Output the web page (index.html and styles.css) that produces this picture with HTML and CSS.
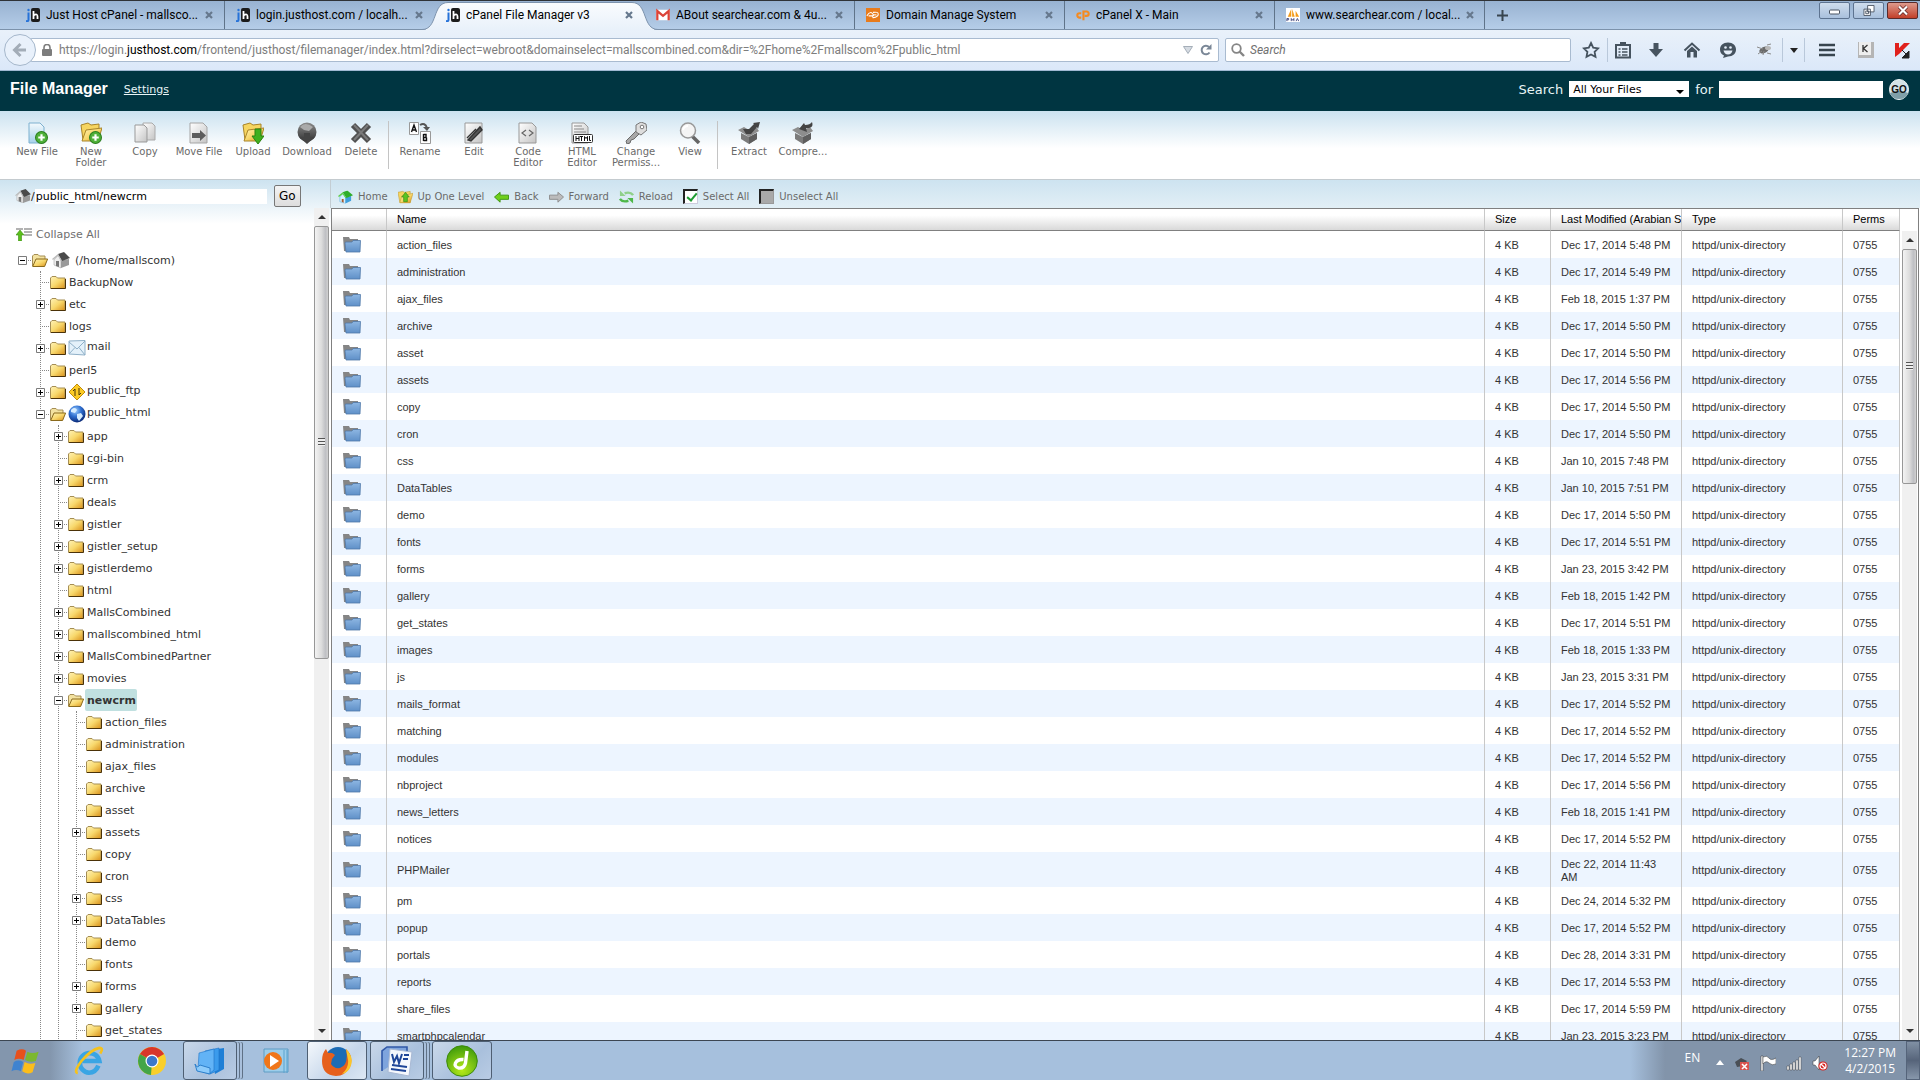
FILE: index.html
```html
<!DOCTYPE html>
<html lang="en">
<head>
<meta charset="utf-8">
<title>cPanel File Manager v3</title>
<link rel="stylesheet" href="styles.css">
</head>
<body>
<svg class="sprite" aria-hidden="true">
  <defs>
    <linearGradient id="gold" x1="0" y1="0" x2="1" y2="1"><stop offset="0" stop-color="#fff3b8"/><stop offset=".5" stop-color="#f8d86c"/><stop offset="1" stop-color="#d9901a"/></linearGradient>
    <linearGradient id="blue" x1="0" y1="0" x2="0" y2="1"><stop offset="0" stop-color="#8db6e2"/><stop offset="1" stop-color="#5f90c8"/></linearGradient>
    <linearGradient id="paper" x1="0" y1="0" x2="1" y2="1"><stop offset="0" stop-color="#fff"/><stop offset="1" stop-color="#c4c4c4"/></linearGradient>
    <linearGradient id="bluepaper" x1="0" y1="0" x2="0" y2="1"><stop offset="0" stop-color="#f4fafd"/><stop offset="1" stop-color="#a5d0ea"/></linearGradient>
    <linearGradient id="dark" x1="0" y1="0" x2="0" y2="1"><stop offset="0" stop-color="#8a8a8a"/><stop offset="1" stop-color="#333"/></linearGradient>
    <linearGradient id="tabfill" x1="0" y1="0" x2="0" y2="1"><stop offset="0" stop-color="#fafcfe"/><stop offset="1" stop-color="#e9f1fa"/></linearGradient>
    <radialGradient id="globe" cx=".4" cy=".3" r=".7"><stop offset="0" stop-color="#9fd0ff"/><stop offset=".5" stop-color="#2f6fd0"/><stop offset="1" stop-color="#0a2a78"/></radialGradient>
    <radialGradient id="lime" cx=".5" cy=".8" r=".8"><stop offset="0" stop-color="#b6ea1c"/><stop offset="1" stop-color="#3e9a0a"/></radialGradient>
  </defs>
  <symbol id="folder" viewBox="0 0 16 13"><path d="M.5 12.500V2L2 .5h4L7.500 2h7.500v10.500z" fill="url(#gold)" stroke="#a58e55"/><path d="M1 12.500h14.500V3" fill="none" stroke="#4b3208"/></symbol>
  <symbol id="folder-open" viewBox="0 0 16 13"><path d="M.5 12V2L2 .5h4L7.500 2h5.500v3" fill="#f3e2a0" stroke="#a58e55"/><path d="M.7 12.500 4 5h11.600l-3 7.500z" fill="url(#gold)" stroke="#8a6a1c"/></symbol>
  <symbol id="dir" viewBox="0 0 18 16"><path d="M0 0h6l1 2h8v12H1z" fill="#858585"/><path d="M2 6l.5-1H9l1-1.500h7.500L17 15H3z" fill="url(#blue)" stroke="#5079a8" stroke-width=".8"/></symbol>
  <symbol id="house" viewBox="0 0 18 16"><path d="M2 8v5l7 3V8L6 3z" fill="#eee" stroke="#999" stroke-width=".5"/><path d="M9 8v8l8-3V7z" fill="#9a9a9a"/><path d="M6 2 12 0l6 6-8 3z" fill="#4a4a4a"/><path d="M0 7 6 2l4 7-1 .5L6 4 1 8z" fill="#bbb"/><path d="M4 9h3v6l-3-1z" fill="#777"/></symbol>
  <symbol id="house-color" viewBox="0 0 16 14"><path d="M2 7v5l6 2V7L5 3z" fill="#d8f0ff" stroke="#58aee0" stroke-width=".6"/><path d="M8 7v7l6-3V6z" fill="#3f9fdc"/><path d="M5 2 10 0l6 5-7 3z" fill="#2fae2a"/><path d="M0 6 5 2l4 6H8L5 4 1 7z" fill="#5fce4a"/><path d="M4 9h2v4l-2-1z" fill="#a85a2a"/></symbol>
  <symbol id="mail" viewBox="0 0 18 16"><path d="M1 1 17 .5V15L1 14z" fill="#e4f1fa" stroke="#8fb0c8"/><path d="m1 2 8 7 8-8M1 14l6-6.500M17 15l-6-7.500" fill="none" stroke="#8fb0c8"/></symbol>
  <symbol id="ftp" viewBox="0 0 18 16"><path d="M9 0 17 8 9 16 1 8z" fill="#fccb25" stroke="#c08d0a"/><path d="M7 12V5L5 7M11 4v7l2-2" fill="none" stroke="#4a3808"/></symbol>
  <symbol id="world" viewBox="0 0 18 18"><circle cx="9" cy="9" r="8.500" fill="url(#globe)"/><path d="M3 5c3-3 5-2 6 0l-2 3-4-1zM9 9l4-1 2 3-4 5-2-3z" fill="#d6ecff"/></symbol>
  <symbol id="tw-plus" viewBox="0 0 14 9"><path d="M.5.500h8v8h-8z" fill="#fff" stroke="#7b7b7b"/><path d="M2 4.500h5M4.500 2v5" stroke="#000"/><path d="M10 4.500h4" stroke="#888" stroke-dasharray="1 1"/></symbol>
  <symbol id="tw-minus" viewBox="0 0 14 9"><path d="M.5.500h8v8h-8z" fill="#fff" stroke="#7b7b7b"/><path d="M2 4.500h5" stroke="#000"/><path d="M10 4.500h4" stroke="#888" stroke-dasharray="1 1"/></symbol>
  <symbol id="tw-leaf" viewBox="0 0 14 9"><path d="M6 4.500h8" stroke="#888" stroke-dasharray="1 1"/></symbol>
  <symbol id="close" viewBox="0 0 8 8"><path d="m1 1 6 6M7 1 1 7" stroke="#66788d" stroke-width="2.200"/></symbol>
  <symbol id="jh" viewBox="0 0 14 14"><rect x="5" width="9" height="14" rx="2" fill="#1c1c1c"/><path d="M7.500 3v8M7.500 7.500q4-2.500 4 1V11" fill="none" stroke="#fff" stroke-width="1.800"/><path d="M2.500 4.500V12q0 1.500-2.500 1" fill="none" stroke="#2672d8" stroke-width="2"/><circle cx="2.500" cy="2" r="1.200" fill="#2672d8"/></symbol>
  <symbol id="badge" viewBox="0 0 12 12"><circle cx="6" cy="6" r="5.500" fill="#4fb13a" stroke="#2d7f20"/><path d="M6 3v6M3 6h6" stroke="#fff" stroke-width="2"/></symbol>
</svg>

<header class="tabstrip">
  <nav class="tabs" aria-label="Open tabs">
    <div class="tab"><svg class="fav"><use href="#jh"/></svg><a href="#">Just Host cPanel - mallsco...</a><button class="x" aria-label="Close tab"><svg><use href="#close"/></svg></button></div>
    <div class="tab"><svg class="fav"><use href="#jh"/></svg><a href="#">login.justhost.com / localh...</a><button class="x" aria-label="Close tab"><svg><use href="#close"/></svg></button></div>
    <div class="tab active"><svg class="shape" viewBox="0 0 236 29"><path d="M0 28.500C16 28.500 10 1.500 26 1.500H210C226 1.500 220 28.500 236 28.500" fill="url(#tabfill)" stroke="#7d93ad"/><path d="M4 28.500H232" stroke="#e9f1fa"/></svg><svg class="fav"><use href="#jh"/></svg><a href="#">cPanel File Manager v3</a><button class="x" aria-label="Close tab"><svg><use href="#close"/></svg></button></div>
    <div class="tab"><svg class="fav" viewBox="0 0 16 12"><path d="M0 0h16v12H0z" fill="#fff"/><path d="M1.500 12V1.500L8 7l6.500-5.500V12" fill="none" stroke="#dc4438" stroke-width="2.600"/></svg><a href="#">ABout searchear.com &amp; 4u...</a><button class="x" aria-label="Close tab"><svg><use href="#close"/></svg></button></div>
    <div class="tab"><svg class="fav" viewBox="0 0 16 16"><path d="M0 0h16v16H0z" fill="#e87b1c"/><path d="M1 9c3-5 6-5 8 0M3 9h5M8 5q6-1 6 2t-6 4q-2-4 4-3" fill="none" stroke="#fff" stroke-width="1.200"/></svg><a href="#">Domain Manage System</a><button class="x" aria-label="Close tab"><svg><use href="#close"/></svg></button></div>
    <div class="tab"><svg class="fav" viewBox="0 0 16 12"><path d="M6 4H4a2.500 2.500 0 0 0 0 5h2M8.500 12V2H12a2.500 2.500 0 0 1 0 5h-2" fill="none" stroke="#f58a1f" stroke-width="2.400"/></svg><a href="#">cPanel X - Main</a><button class="x" aria-label="Close tab"><svg><use href="#close"/></svg></button></div>
    <div class="tab"><svg class="fav" viewBox="0 0 16 16"><path d="M0 0h16v16H0z" fill="#fff"/><path d="m2 10 4-9v9zM7 10V1l3 9zM11 10V3l4 7z" fill="#f39b1a"/><path d="M1 15v-3h2v1.500H1M6 15v-3l1.500 2L9 12v3M11.500 15l1.500-3 1.500 3" fill="none" stroke="#3a3f78"/></svg><a href="#">www.searchear.com / local...</a><button class="x" aria-label="Close tab"><svg><use href="#close"/></svg></button></div>
    <button class="newtab" aria-label="New tab"><svg viewBox="0 0 11 11"><path d="M5.500 0v11M0 5.500h11" stroke="#38454f" stroke-width="2"/></svg></button>
  </nav>
  <div class="winbtns">
    <button aria-label="Minimize"><svg viewBox="0 0 12 10"><rect x=".5" y="4.500" width="10" height="4" rx="1" fill="#fff" stroke="#4a5462"/></svg></button>
    <button aria-label="Restore"><svg viewBox="0 0 12 12"><path d="M4.500.500h7v7h-7zM.5 4.500h7v7h-7z" fill="#fff" stroke="#4a5462"/><path d="M2.500 6.500h3v3h-3z" fill="none" stroke="#4a5462"/></svg></button>
    <button class="danger" aria-label="Close"><svg viewBox="0 0 12 10"><path d="m2 1 8 8M10 1 2 9" stroke="#5a2020" stroke-width="3.600"/><path d="m2 1 8 8M10 1 2 9" stroke="#fff" stroke-width="2.200"/></svg></button>
  </div>
</header>

<div class="navbar">
  <button class="back" aria-label="Back"><svg viewBox="0 0 16 16"><path d="M14 8H3M8.500 2 2.500 8l6 6" fill="none" stroke="#a3adb8" stroke-width="3"/></svg></button>
  <div class="url">
    <svg class="lock" viewBox="0 0 10 12"><path d="M2 6V3.500a3 3 0 0 1 6 0V6" fill="none" stroke="#7d7d7d" stroke-width="1.600"/><rect y="5" width="10" height="7" rx="1" fill="#7d7d7d"/></svg>
    <a class="address" href="#">https://login.<b>justhost.com</b>/frontend/justhost/filemanager/index.html?dirselect=webroot&amp;domainselect=mallscombined.com&amp;dir=%2Fhome%2Fmallscom%2Fpublic_html</a>
    <button aria-label="History"><svg class="i10" viewBox="0 0 10 8"><path d="M.5.500h9L5 7.500z" fill="#d5dbe2" stroke="#a5aeb8"/></svg></button>
    <button aria-label="Reload page"><svg class="i12" viewBox="0 0 12 12"><path d="M9.500 8.500A4.300 4.300 0 1 1 9 3" fill="none" stroke="#7a8797" stroke-width="2"/><path d="M11.500 0v5.500H6z" fill="#7a8797"/></svg></button>
  </div>
  <label class="websearch"><svg viewBox="0 0 14 14"><circle cx="5.500" cy="5.500" r="4.300" fill="none" stroke="#858585" stroke-width="1.800"/><path d="m8.500 8.500 4.500 4.500" stroke="#858585" stroke-width="2.400"/></svg><input type="text" placeholder="Search" aria-label="Web search"></label>
  <div class="tools">
    <button class="star" aria-label="Bookmark"><svg viewBox="0 0 18 18"><path d="m9 2 2.200 4.600 5 .7-3.600 3.500.9 5L9 13.400l-4.500 2.400.9-5L1.800 7.300l5-.7z" fill="none" stroke="#46535f" stroke-width="1.800"/></svg></button>
    <button class="ruled" aria-label="Bookmarks list"><svg viewBox="0 0 18 18"><path d="M2 4h14v12.500H2z" fill="none" stroke="#46535f" stroke-width="2"/><path d="M6 1h6v4H6z" fill="#46535f"/><path d="M4.500 8h2M8 8h5.500M4.500 11h2M8 11h5.500M4.500 14h2M8 14h5.500" stroke="#46535f" stroke-width="1.400"/></svg></button>
    <button aria-label="Downloads"><svg viewBox="0 0 18 18"><path d="M6.500 2h5v6H16l-7 8-7-8h4.500z" fill="#46535f"/></svg></button>
    <button aria-label="Home page"><svg viewBox="0 0 18 18"><path d="m1.500 9.500 7.500-7 7.500 7" fill="none" stroke="#46535f" stroke-width="2"/><path d="M4 10l5-4.500L14 10v6.500h-3.500V11h-3v5.500H4z" fill="#46535f"/></svg></button>
    <button aria-label="Chat"><svg viewBox="0 0 18 18"><path d="M9 1.500c5 0 8 3 8 7s-3 7-8 7l-5 1.500 1-2.500C2.500 13.500 1 11.500 1 8.500c0-4 3-7 8-7z" fill="#46535f"/><circle cx="6.500" cy="6.500" r="1.300" fill="#e5eef9"/><circle cx="11.500" cy="6.500" r="1.300" fill="#e5eef9"/><path d="M4.500 9.500h9q-1 4-4.500 4t-4.500-4z" fill="#e5eef9"/></svg></button>
    <button aria-label="Firebug"><svg viewBox="0 0 18 18"><ellipse cx="9" cy="9" rx="5" ry="3" fill="#6b6b6b" transform="rotate(-25 9 9)"/><path d="M2 6 8 8M3 13l4-3M8 14l1-4M12 4l4-1M12 12l4 1" stroke="#8b8b8b"/><ellipse cx="13" cy="7" rx="3" ry="2" fill="#b8b8b8"/></svg></button>
    <button class="ruled caret" aria-label="Firebug menu"><svg viewBox="0 0 8 5"><path d="M0 0h8L4 5z" fill="#222"/></svg></button>
    <button class="ruled menu" aria-label="Menu"><svg viewBox="0 0 18 18"><path d="M1 4h16M1 9h16M1 14h16" stroke="#38454f" stroke-width="2.600"/></svg></button>
    <button aria-label="Keyboard"><svg viewBox="0 0 18 18"><path d="M1 1h16v16H1z" fill="#b5b5b5"/><path d="M2 1h12v13H2z" fill="#eee"/><path d="M6 4v7M10.500 4 6.500 7.500l4 3.500" fill="none" stroke="#333" stroke-width="1.300"/></svg></button>
    <button aria-label="Kaspersky"><svg viewBox="0 0 18 18"><path d="M2 2h4v5l5-5h6L6 13l-4 3z" fill="#e0201c"/><path d="M9 9l7 7M16 10v7H9z" fill="#222" stroke="#222"/></svg></button>
  </div>
</div>

<div class="appbar">
  <h1>File Manager</h1>
  <a href="#">Settings</a>
  <form class="filesearch" onsubmit="return false">
    <label for="scope">Search</label>
    <span class="pick"><select id="scope"><option>All Your Files</option></select></span>
    <label for="term">for</label>
    <input id="term" type="text">
    <button class="go" aria-label="Search files"><svg viewBox="0 0 20 21"><ellipse cx="10" cy="10.500" rx="9.500" ry="10" fill="#d5e3e7" stroke="#eef6f8"/><path d="M1 14q9-4 18 0-2 6-9 6t-9-6z" fill="#7f9fa8"/><text x="10" y="14" text-anchor="middle">GO</text></svg></button>
  </form>
</div>

<div class="toolbar">
  <div class="group">
    <button><svg viewBox="0 0 22 22"><path d="M3 1h11l4 4v16H3z" fill="url(#bluepaper)" stroke="#7db0cf"/><use href="#badge" x="9" y="9" width="13" height="13"/></svg>New File</button>
    <button><svg viewBox="0 0 22 22"><path d="m1 3 7-2 3 2 8-1v16H3z" fill="#f6d560" stroke="#a98428"/><path d="m2 19 4-11 16-2-4 13z" fill="url(#gold)" stroke="#a98428"/><use href="#badge" x="9" y="9" width="13" height="13"/></svg>New Folder</button>
    <button><svg viewBox="0 0 22 22"><path d="M9 1h9l3 3v14H9z" fill="url(#paper)" stroke="#aaa"/><path d="M1 3h9l3 3v14H1z" fill="url(#paper)" stroke="#999"/></svg>Copy</button>
    <button><svg viewBox="0 0 22 22"><path d="M2 1h13l4 4v16H2z" fill="url(#paper)" stroke="#a5a5a5"/><path d="M4 11h8V8l6 5.500-6 5.500v-3H4z" fill="#5c5c5c"/></svg>Move File</button>
    <button><svg viewBox="0 0 22 22"><path d="m1 3 7-2 3 2 8-1v16H3z" fill="#f6d560" stroke="#a98428"/><path d="m2 19 4-11 16-2-4 13z" fill="url(#gold)" stroke="#a98428"/><path d="M13 7h6v7h3l-6 8-6-8h3z" fill="#3fb01e" stroke="#2b8310"/></svg>Upload</button>
    <button><svg viewBox="0 0 22 22"><circle cx="11" cy="10" r="9.500" fill="url(#dark)"/><path d="M4 5q5-6 13 0l-4 4-5-1z" fill="#aaa"/><path d="M8 11h6v4h5l-8 7-8-7h5z" fill="#444"/></svg>Download</button>
    <button><svg viewBox="0 0 22 22"><path d="m3 3 16 16M19 3 3 19" stroke="#505050" stroke-width="6"/><path d="m4 3 14 15M18 3 4 18" stroke="#7a7a7a" stroke-width="2"/></svg>Delete</button>
  </div>
  <div class="group">
    <button><svg viewBox="0 0 22 22"><path d="M.5.500h9v12h-9zM11.500 9.500h10v12h-10z" fill="#fff" stroke="#999"/><path d="M2.500 10 5 3l2.500 7M3 8h4M14.500 12v7M14.500 12.500h2.500v3h-2.500M14.500 18.500h3v-3" fill="none" stroke="#111" stroke-width="1.400"/><path d="M11 3q5-3 7 3" fill="none" stroke="#555" stroke-width="2"/><path d="M14 5h7l-3 4z" fill="#555"/></svg>Rename</button>
    <button><svg viewBox="0 0 22 22"><path d="M2 1h17v20H2z" fill="url(#paper)" stroke="#999"/><path d="M5 18 17 5l2 3L8 19zM4 16 13 7" fill="#555" stroke="#333" stroke-width="1.400"/></svg>Edit</button>
    <button><svg viewBox="0 0 22 22"><path d="M2 1h13l4 4v16H2z" fill="url(#paper)" stroke="#999"/><path d="m9 8-4 3 4 3M12 8l4 3-4 3" fill="none" stroke="#666" stroke-width="1.200"/></svg>Code Editor</button>
    <button><svg viewBox="0 0 22 22"><path d="M1 1h12l4 4v16H1z" fill="url(#paper)" stroke="#999"/><path d="M3 4h8M3 7h10M3 10h12" stroke="#888"/><rect x="2.500" y="12.500" width="19" height="8" rx="1" fill="#fff" stroke="#333"/><path d="M5 14v5M8 14v5M5 16.500h3M9 14.500h3M10.500 14.500V19M13.500 19v-4.500l1.500 2 1.500-2V19M18.500 14v4.500H20" fill="none" stroke="#111"/></svg>HTML Editor</button>
    <button><svg viewBox="0 0 22 22"><path d="M12 8 1 19l1 3 3-1 1-3 3-1 6-6z" fill="#a8a8a8" stroke="#6b6b6b"/><path d="m11 3 5-3 5 2 1 6-6 5-5-3z" fill="#ddd" stroke="#777"/><circle cx="17" cy="5" r="1.800" fill="#fff" stroke="#777"/></svg>Change Permiss...</button>
    <button><svg viewBox="0 0 22 22"><path d="m13 14 7 7" stroke="#666" stroke-width="3.500"/><circle cx="9" cy="8.500" r="7.500" fill="#f4f4f4" stroke="#999" stroke-width="1.500"/><path d="M4 8q1-4 5-4" fill="none" stroke="#fff" stroke-width="2"/></svg>View</button>
  </div>
  <div class="group">
    <button><svg viewBox="0 0 22 22"><path d="m3 11 8 4 8-4v6l-8 5-8-5z" fill="#7b7b7b"/><path d="m11 15 8-4v6l-8 5z" fill="#5e5e5e"/><path d="m0 8 6-3 5 3 7-3 3 4-10 6z" fill="#8d8d8d"/><path d="M5 7h6l5-5-1-1 7-1-2 7-1-2-6 7H8z" fill="#444"/></svg>Extract</button>
    <button><svg viewBox="0 0 22 22"><path d="m3 11 8 4 8-4v6l-8 5-8-5z" fill="#7b7b7b"/><path d="m11 15 8-4v6l-8 5z" fill="#5e5e5e"/><path d="m0 8 6-3 5 3 7-3 3 4-10 6z" fill="#8d8d8d"/><path d="M20 0q2 5-3 6h-3l1 4-8-3 5-6 1 2q5 0 7-3z" fill="#444"/></svg>Compre...</button>
  </div>
</div>

<main class="work">
  <aside class="side">
    <form class="path" onsubmit="return false">
      <svg class="home"><use href="#house"/></svg><label for="dir">/</label><input id="dir" type="text" value="public_html/newcrm"><button>Go</button>
    </form>
    <div class="treewrap">
      <div class="treescroll">
        <a class="collapse" href="#"><svg viewBox="0 0 16 13"><path d="M0 1h7M8 1h8M8 4h8M8 7h8" stroke="#999" stroke-width="1.300"/><path d="M4 2 8 7H5.500v6h-3V7H0z" fill="#5bbf1c" stroke="#3b8f10" stroke-width=".6"/></svg>Collapse All</a>
        <div id="tree" class="tree"></div>
      </div>
      <div class="sbar"><span class="arr up"></span><div class="thumb tree-thumb"><i></i></div><span class="arr down"></span></div>
    </div>
  </aside>
  <section class="files">
    <div class="actions">
      <button><svg viewBox="0 0 16 14"><use href="#house-color"/></svg>Home</button>
      <button><svg viewBox="0 0 16 14"><path d="m0 2 5-1 2 1 6-1v12H2z" fill="#f6d560" stroke="#c29a2c" stroke-width=".6"/><path d="m2 13 2-7 12-3-3 10z" fill="url(#gold)" stroke="#c29a2c" stroke-width=".6"/><path d="m8 2 4 5h-2v5H6V7H4z" fill="#5cc322" stroke="#2b8310" stroke-width=".6"/></svg>Up One Level</button>
      <button><svg viewBox="0 0 16 14"><path d="m.5 7 6-5v3h9v4.500h-9v3z" fill="#6fcf1c" stroke="#3e9410"/></svg>Back</button>
      <button><svg viewBox="0 0 16 14"><path d="m15.500 7-6-5v3H.5v4.500h9v3z" fill="#bbb" stroke="#8d8d8d"/></svg>Forward</button>
      <button><svg viewBox="0 0 16 14"><path d="M15 5q-3-4-9-2" fill="none" stroke="#8fd08a" stroke-width="2.600"/><path d="M1 0v6h6z" fill="#8fd08a"/><path d="M1 9q3 4 9 2" fill="none" stroke="#4fb84a" stroke-width="2.600"/><path d="M15 14V8H9z" fill="#4fb84a"/></svg>Reload</button>
      <label><input type="checkbox" checked>Select All</label>
      <label><input type="checkbox" class="off">Unselect All</label>
    </div>
    <div class="grid">
      <div class="gridtable">
        <table>
          <colgroup><col class="c-ico"><col><col class="c-size"><col class="c-mod"><col class="c-type"><col class="c-perm"></colgroup>
          <thead><tr><th></th><th>Name</th><th>Size</th><th>Last Modified (Arabian St</th><th>Type</th><th>Perms</th></tr></thead>
          <tbody id="rows"></tbody>
        </table>
      </div>
      <div class="sbar grid-sbar"><span class="arr up"></span><div class="thumb grid-thumb"><i></i></div><span class="arr down"></span></div>
    </div>
  </section>
</main>

<footer class="taskbar">
  <button class="start" aria-label="Start"><svg viewBox="0 0 32 30"><path d="M6 4q6-3 10 0l-2.500 10q-5-3-10 0z" fill="#e8501c"/><path d="M17.500 5q5 3 12 0l-3 10q-6 2-11.500-1z" fill="#7cb82f"/><path d="M3 16q5-3 10 0l-2.500 10q-5-3-10 0z" fill="#3f83d0"/><path d="M14.500 16q5 3 11.500 1l-3 10q-6 3-11-1z" fill="#fbbd1c"/></svg></button>
  <button class="ie" aria-label="Internet Explorer"><svg viewBox="0 0 32 30"><path d="M26 20q-3 7.500-10 7.500A10.500 10.500 0 1 1 27 15H9" fill="none" stroke="#3aa5e4" stroke-width="5"/><path d="M4 28q-5-1 4-13Q18 3 27 1q5 0 1 6" fill="none" stroke="#f5c21d" stroke-width="2.800"/></svg></button>
  <button class="chrome" aria-label="Chrome"><svg viewBox="0 0 30 30"><circle cx="15" cy="15" r="14" fill="#f9cf2b"/><path d="M15 15 2.900 8A14 14 0 0 1 27.100 8z" fill="#d8362a"/><path d="M15 15 14 29A14 14 0 0 1 2.900 8z" fill="#43a547"/><circle cx="15" cy="15" r="6.500" fill="#fff"/><circle cx="15" cy="15" r="5.300" fill="#3d78c9"/></svg></button>
  <button class="open stack explorer" aria-label="Explorer"><svg viewBox="0 0 32 30"><path d="m17 4 13-2v21l-9 5z" fill="#1e7fd6"/><path d="m11 5 14-3v22l-9 4z" fill="#3b9bec" stroke="#1e74c8" stroke-width=".6"/><path d="m5 7 15-4v21l-5 4-11-4z" fill="#62b3f6" stroke="#1e74c8" stroke-width=".6"/><path d="M1 18q2 5 5 1l10 3v6L3 25z" fill="#8ccbfb" stroke="#2c7fcb"/></svg></button>
  <button class="wmp" aria-label="Media Player"><svg viewBox="0 0 30 28"><path d="M2 2h24v23H2z" fill="#9ccdea" stroke="#5f9cc4"/><path d="M22 3v23M25 3v23" stroke="#5aa3cf"/><circle cx="11" cy="14" r="9" fill="#f0761a"/><path d="m8 8 9 6-9 6z" fill="#fff"/></svg></button>
  <button class="open lit" aria-label="Firefox"><svg viewBox="0 0 32 32"><circle cx="17" cy="15" r="13" fill="#1c6cb5"/><path d="M25 4q8 8 4 18-5 9-14 9Q1 30 1 16q0-8 4-12l2 4q4-1 7 2l-3 4-1 5q3 5 9 4 9-3 6-19z" fill="#e6601c"/><path d="M25 4q9 9 4 19-3 5-8 6 7-6 6-14z" fill="#fcc52a"/></svg></button>
  <button class="open stack" aria-label="Word"><svg viewBox="0 0 32 32"><path d="M1 26V6l5-4h20v8" fill="#7ea4dd" stroke="#3058a8" stroke-width="1.600"/><path d="m9 4 22 3-3 24-21-4z" fill="#f5f8fd" stroke="#a9b9d4"/><path d="m11 9 2 8 3-6 2 7 3-9M23 10h5M22 14h5M11 20l15 2M10 24l15 2" fill="none" stroke="#1f4698" stroke-width="2"/></svg></button>
  <button class="open" aria-label="Dreamweaver"><svg viewBox="0 0 32 32"><circle cx="16" cy="16" r="15.300" fill="url(#lime)" stroke="#3d8a0c"/><path d="M21 6 19.500 18q-1.500 6-7 5-4.500-1.500-3-5 2-4 8-3.500" fill="none" stroke="#fff" stroke-width="3.400"/></svg></button>
  <div class="tray">
    <span class="lang">EN</span>
    <svg class="t-up" viewBox="0 0 8 6"><path d="M0 5h8L4 0z" fill="#fff"/></svg>
    <svg viewBox="0 0 16 16"><path d="m1 7 6-4 6 3-4 5-6 1z" fill="#4a4f56"/><path d="M6 7h9v8H6z" fill="#d9534f"/><path d="m8 9 5 5M13 9l-5 5" stroke="#fff" stroke-width="1.600"/></svg>
    <svg viewBox="0 0 16 16"><path d="M1 1h2v15H1z" fill="#fff" stroke="#333" stroke-width=".5"/><path d="M3 2q4-2 6 1t7 0v6q-4 2-7-1T3 9z" fill="#fff" stroke="#333" stroke-width=".5"/></svg>
    <svg viewBox="0 0 16 16"><path d="M1 11h2v4H1zM4 9h2v6H4zM7 7h2v8H7zM10 5h2v10h-2zM13 2h2v13h-2z" fill="#fff" stroke="#444" stroke-width=".5"/></svg>
    <svg viewBox="0 0 16 16"><path d="M1 6h2l4-5v14l-4-5H1z" fill="#fff" stroke="#333" stroke-width=".5"/><circle cx="11" cy="11" r="4.600" fill="#d8201c"/><circle cx="11" cy="11" r="3" fill="none" stroke="#fff" stroke-width="1.200"/><path d="m9 9 4 4" stroke="#fff" stroke-width="1.200"/></svg>
    <time class="clock"><span>12:27 PM</span><span>4/2/2015</span></time>
    <button class="desk" aria-label="Show desktop"></button>
  </div>
</footer>
<script src="app.js"></script>
</body>
</html>
```
FILE: styles.css
```css
* { box-sizing: border-box; }
body {
  margin: 0;
  height: 100vh;
  display: flex;
  flex-direction: column;
  overflow: hidden;
  font: 11px/13px "DejaVu Sans", Verdana, sans-serif;
  color: #333;
  background: #fff;
}
button { font: inherit; color: inherit; border: 0; padding: 0; margin: 0; background: none; }
input, select { font: inherit; margin: 0; border: 0; border-radius: 0; }
a { color: inherit; text-decoration: none; }
svg { display: block; flex: none; }
.sprite { position: absolute; width: 0; height: 0; }

/* browser tabs */
.tabstrip {
  flex: none;
  display: flex;
  justify-content: space-between;
  height: 30px;
  padding-left: 15px;
  border-top: 1px solid #2f3236;
  border-bottom: 1px solid #7c92ab;
  background: linear-gradient(#98b2d1, #b5cde8);
  font: 12px/16px Roboto, "Segoe UI", sans-serif;
  color: #000;
}
.tabs { display: flex; }
.tab {
  position: relative;
  display: flex;
  align-items: center;
  gap: 6px;
  width: 210px;
  padding: 0 11px;
  border-right: 1px solid #5f7389;
}
.tab a { flex: 1; position: relative; white-space: nowrap; }
.tab .fav { position: relative; width: 14px; height: 14px; }
.tab .x { position: relative; }
.tab .x svg { width: 8px; height: 8px; }
.tab:nth-child(2), .tab.active { border-right-color: transparent; }
.tab .shape { position: absolute; left: -13px; top: 0; width: 236px; height: 29px; }
.tab.active { z-index: 1; }
.newtab { padding: 0 12px; }
.newtab svg { width: 11px; height: 11px; }
.winbtns { display: flex; gap: 3px; padding: 1px 2px 0 0; }
.winbtns button {
  display: flex;
  align-items: center;
  justify-content: center;
  width: 31px;
  height: 17px;
  border: 1px solid #5d7390;
  border-radius: 2px;
  background: linear-gradient(#cfdded, #a9c0dc);
}
.winbtns svg { width: 12px; height: 11px; }
.winbtns .danger { border-color: #5a2a2a; background: linear-gradient(#dd9a8c, #c23f2a); }

/* navigation bar */
.navbar {
  flex: none;
  display: flex;
  align-items: center;
  height: 41px;
  padding-left: 4px;
  border-bottom: 1px solid #9fb8d2;
  background: linear-gradient(#e9f1fa, #dbe8f9);
  font: 12px/16px Roboto, "Segoe UI", sans-serif;
}
.back {
  z-index: 1;
  display: flex;
  align-items: center;
  justify-content: center;
  width: 32px;
  height: 32px;
  border: 1px solid #a5b7cb;
  border-radius: 50%;
  background: #e9f1fb;
}
.back svg { width: 16px; height: 16px; }
.url, .websearch {
  display: flex;
  align-items: center;
  height: 24px;
  border: 1px solid #a9bbd0;
  border-radius: 2px;
  background: #fff;
}
.url { flex: 1; gap: 7px; margin-left: -6px; padding: 0 6px 0 11px; color: #7d7d7d; min-width: 0; }
.url .address { flex: 1; white-space: nowrap; overflow: hidden; }
.address b { font-weight: 400; color: #000; }
.lock { width: 10px; height: 12px; }
.i10 { width: 10px; height: 8px; }
.i12 { width: 12px; height: 12px; }
.websearch { gap: 5px; width: 346px; margin-left: 6px; padding: 0 5px; }
.websearch svg { width: 14px; height: 14px; }
.websearch input { flex: 1; min-width: 0; padding: 0; background: none; outline: 0; }
.websearch input::placeholder { color: #707070; font-style: italic; opacity: 1; }
.tools { display: flex; align-items: center; margin-left: 4px; }
.tools button { display: flex; align-items: center; justify-content: center; width: 36px; height: 24px; }
.tools svg { width: 18px; height: 18px; }
.tools .star { width: 32px; }
.tools .ruled { width: 31px; border-left: 1px solid #b9c8da; }
.tools .caret { width: 22px; }
.tools .caret svg { width: 8px; height: 5px; }
.tools .menu { width: 44px; }

/* application header */
.appbar {
  flex: none;
  display: flex;
  align-items: center;
  gap: 16px;
  height: 40px;
  padding: 0 11px 4px 10px;
  background: #003541;
  color: #fff;
}
.appbar h1 { margin: 0; font: bold 16px/18px "Liberation Sans", Arial, sans-serif; }
.appbar a { text-decoration: underline; color: #e8f4f6; }
.filesearch { display: flex; align-items: center; gap: 6px; margin-left: auto; font-size: 13px; color: #e8f4f6; }
.pick { position: relative; font-size: 11px; }
.pick::after { content: ""; position: absolute; right: 5px; bottom: 3px; border: 4px solid transparent; border-top-color: #000; border-bottom: 0; }
.filesearch select { display: block; appearance: none; width: 120px; height: 16px; padding: 0 4px; background: #fff; color: #000; }
.filesearch input { width: 164px; height: 17px; background: #fff; }
.go svg { width: 20px; height: 21px; }
.go text { font: bold 10px "Liberation Sans", Arial, sans-serif; fill: #111; }

/* toolbar */
.toolbar {
  flex: none;
  display: flex;
  height: 69px;
  padding: 10px;
  border-bottom: 1px solid #c4cbcf;
  background: linear-gradient(#cbe2f0, #fff 55%);
  font-size: 10px;
  line-height: 11px;
  color: #6a6a6a;
}
.group { display: flex; height: 48px; }
.group + .group { padding-left: 5px; border-left: 1px solid #c4c4c4; }
.group + .group button:first-child { margin-left: -1px; }
.toolbar button { display: flex; flex-direction: column; align-items: center; gap: 2px; width: 54px; height: 48px; text-align: center; }
.toolbar svg { width: 22px; height: 22px; margin-top: 1px; }

/* work area */
.work { flex: 1; display: flex; min-height: 0; }
.side {
  display: flex;
  flex-direction: column;
  width: 331px;
  background: linear-gradient(#cde3f0, #fff 44px);
}
.path { flex: none; display: flex; align-items: center; height: 28px; padding-left: 15px; padding-top: 4px; border-right: 1px solid #c3cdd3; color: #222; }
.path input { width: 232px; height: 15px; padding: 0 1px; background: #fff; color: #000; }
.path button {
  width: 27px;
  height: 22px;
  margin-left: 7px;
  border: 1px solid #777;
  border-radius: 2px;
  background: linear-gradient(#f4f4f4, #ddd);
  color: #000;
  font-size: 12px;
}
.path .home { width: 16px; height: 14px; }
.treewrap { flex: 1; display: flex; min-height: 0; }
.treescroll { flex: 1; overflow: hidden; padding-top: 19px; }
.collapse { display: flex; align-items: center; gap: 4px; height: 14px; padding-left: 16px; color: #6f6f6f; }
.collapse svg { width: 16px; height: 13px; }
.tree { padding: 6px 0 0 22px; }
.tree ul { margin: 0 0 0 17px; padding: 0; list-style: none; border-left: 1px dotted #888; }
.tree > ul { margin-left: 0; border-left-color: transparent; }
.row { display: flex; align-items: center; height: 22px; margin-left: -5px; }
.tree > ul > li > .row { height: 26px; margin-bottom: -2px; }
.twig { width: 14px; height: 9px; }
.fold { width: 16px; height: 13px; }
.row a { padding: 5px 0 3px 3px; line-height: 14px; }
.extra { width: 18px; height: 18px; margin-left: 2px; }
.row .extra + a { padding: 0 0 3px 1px; }
.row.root .extra { margin-left: 4px; }
.row.root .extra + a { padding: 1px 0 0 5px; }
.row .current { margin-left: 1px; padding: 5px 1px 3px 2px; border-radius: 2px; background: #c0e0e0; font-weight: 700; }

/* scroll bars */
.sbar { display: flex; flex-direction: column; align-items: center; width: 17px; padding-right: 2px; background: #f0f0f0; background-clip: content-box; }
.arr { flex: none; height: 18px; padding-top: 7px; }
.arr::before { content: ""; display: block; border: 4px solid transparent; }
.arr.up::before { border-top: 0; border-bottom-color: #333; }
.arr.down::before { border-bottom: 0; border-top-color: #333; }
.arr.down { margin-top: auto; }
.thumb {
  display: flex;
  align-items: center;
  justify-content: center;
  width: 15px;
  border: 1px solid #979797;
  border-radius: 2px;
  background: linear-gradient(90deg, #f3f3f3, #dcdcdc 50%, #bfc0c4 80%, #d0d0d0);
}
.thumb i { width: 7px; height: 8px; background: repeating-linear-gradient(#555 0 1px, #eee 1px 3px); }
.tree-thumb { height: 52%; }
.grid-thumb { height: 29%; }

/* file listing */
.files { flex: 1; display: flex; flex-direction: column; min-width: 0; }
.actions {
  flex: none;
  display: flex;
  align-items: center;
  gap: 10px;
  height: 28px;
  padding: 5px 7px 0;
  background: linear-gradient(#cde3f0, #e2eff6);
  font-size: 10px;
  color: #6a6a6a;
}
.actions button, .actions label { display: flex; align-items: center; gap: 5px; }
.actions svg { width: 15px; height: 14px; }
.actions input { appearance: none; width: 15px; height: 15px; border: 1px solid #ccd; border-top: 2px solid #222; border-left: 2px solid #222; background: #fff; }
.actions input:checked::before { content: ""; display: block; width: 4px; height: 8px; margin: 0 0 0 4px; border: solid #1f9c33; border-width: 0 2px 2px 0; transform: rotate(40deg); }
.actions .off { background: #a9a9a9; border-right-color: #999; border-bottom-color: #999; }
.grid { flex: 1; display: flex; min-height: 0; margin-right: 1px; border: 1px solid #808080; border-bottom: 0; }
.gridtable { flex: 1; overflow: hidden; }
table { width: 100%; border-collapse: separate; border-spacing: 0; table-layout: fixed; font: 11px/13px "Liberation Sans", Arial, sans-serif; }
.c-ico { width: 55px; }
.c-size { width: 66px; }
.c-mod { width: 131px; }
.c-type { width: 161px; }
.c-perm { width: 57px; }
th, td { padding: 0 10px; border-right: 1px solid #c8c8c8; text-align: left; overflow: hidden; }
th { height: 22px; border-bottom: 1px solid #808080; background: linear-gradient(#fff 30%, #d9d9d9); color: #000; font-weight: 400; white-space: nowrap; }
td { height: 27px; padding-top: 2px; }
td.tall { height: 35px; }
td:first-child { padding: 0 0 0 11px; }
td svg { width: 18px; height: 16px; }
tbody tr:nth-child(even) { background: #edf5ff; }
.grid-sbar { width: 18px; padding: 22px 1px 0 2px; }

/* taskbar */
.taskbar {
  flex: none;
  display: flex;
  align-items: center;
  height: 40px;
  padding-left: 11px;
  border-top: 1px solid #3c4652;
  background: linear-gradient(90deg, #8396ad, #8396ad 50px, #a6c0dd 82px, #a6c0dd calc(100% - 290px), #8294aa calc(100% - 255px));
}
.taskbar svg { width: 30px; height: 30px; }
.taskbar button { display: flex; align-items: center; justify-content: center; height: 39px; }
.start, .ie { width: 63px; }
.taskbar .start, .taskbar .ie { justify-content: flex-start; }
.taskbar .chrome { width: 46px; justify-content: flex-start; }
.taskbar .open { width: 60px; margin-right: 3px; border: 1px solid #4e5f73; border-radius: 3px; background: linear-gradient(135deg, #c9d8ea, #a9c0dc 60%, #b9cce4); }
.taskbar .lit { margin-left: 15px; background: linear-gradient(135deg, #f4f8fc, #c5d6ea 60%, #dde8f4); }
.taskbar .open svg { width: 32px; height: 32px; }
.taskbar .stack { width: 54px; margin-right: 8px; box-shadow: 3px 0 0 -1px #a9c0dc, 4px 0 0 -1px #5f7186, 6px 0 0 -1px #a9c0dc, 7px 0 0 -1px #5f7186; }
.taskbar .explorer { margin-right: 25px; }
.tray { display: flex; align-items: center; gap: 10px; margin-left: auto; color: #fff; font: 12px/16px "Open Sans", "Segoe UI", sans-serif; }
.taskbar .tray svg { width: 16px; height: 16px; }
.taskbar .tray .t-up { width: 8px; height: 6px; }
.lang { padding: 0 6px 6px 0; }
.tray svg { margin-top: 4px; }
.clock { display: flex; flex-direction: column; align-items: center; padding: 1px 0 0 6px; }
.taskbar .desk { width: 14px; border: 1px solid #55647a; background: linear-gradient(#8090a4, #56647a 50%, #8797ab); }
```
FILE: app.js
```javascript
// Folder tree: [name, state, icon, children]; state is "leaf", "plus" or "minus".
const leaf = (n) => [n, "leaf"];
const plus = (n, icon) => [n, "plus", icon];
const tree = ["(/home/mallscom)", "minus", "house", [
  leaf("BackupNow"), plus("etc"), leaf("logs"), plus("mail", "mail"), leaf("perl5"), plus("public_ftp", "ftp"),
  ["public_html", "minus", "world", [
    plus("app"), leaf("cgi-bin"), plus("crm"), leaf("deals"), plus("gistler"), plus("gistler_setup"),
    plus("gistlerdemo"), leaf("html"), plus("MallsCombined"), plus("mallscombined_html"),
    plus("MallsCombinedPartner"), plus("movies"),
    ["newcrm", "minus", "", [
      leaf("action_files"), leaf("administration"), leaf("ajax_files"), leaf("archive"), leaf("asset"),
      plus("assets"), leaf("copy"), leaf("cron"), plus("css"), plus("DataTables"), leaf("demo"),
      leaf("fonts"), plus("forms"), plus("gallery"), leaf("get_states")
    ]]
  ]]
]];

const icon = (cls, id) => `<svg class="${cls}"><use href="#${id}"/></svg>`;

function branch([name, state, extra, kids], root) {
  const row = icon("twig", "tw-" + state)
    + icon("fold", state === "minus" ? "folder-open" : "folder")
    + (extra ? icon("extra", extra) : "")
    + `<a href="#"${name === "newcrm" ? ' class="current"' : ""}>${name}</a>`;
  const list = kids ? `<ul>${kids.map((k) => branch(k)).join("")}</ul>` : "";
  return `<li><div class="row${root ? " root" : ""}">${row}</div>${list}</li>`;
}
document.getElementById("tree").innerHTML = `<ul>${branch(tree, true)}</ul>`;

const files = [
  ["action_files", "Dec 17, 2014 5:48 PM"], ["administration", "Dec 17, 2014 5:49 PM"],
  ["ajax_files", "Feb 18, 2015 1:37 PM"], ["archive", "Dec 17, 2014 5:50 PM"],
  ["asset", "Dec 17, 2014 5:50 PM"], ["assets", "Dec 17, 2014 5:56 PM"],
  ["copy", "Dec 17, 2014 5:50 PM"], ["cron", "Dec 17, 2014 5:50 PM"],
  ["css", "Jan 10, 2015 7:48 PM"], ["DataTables", "Jan 10, 2015 7:51 PM"],
  ["demo", "Dec 17, 2014 5:50 PM"], ["fonts", "Dec 17, 2014 5:51 PM"],
  ["forms", "Jan 23, 2015 3:42 PM"], ["gallery", "Feb 18, 2015 1:42 PM"],
  ["get_states", "Dec 17, 2014 5:51 PM"], ["images", "Feb 18, 2015 1:33 PM"],
  ["js", "Jan 23, 2015 3:31 PM"], ["mails_format", "Dec 17, 2014 5:52 PM"],
  ["matching", "Dec 17, 2014 5:52 PM"], ["modules", "Dec 17, 2014 5:52 PM"],
  ["nbproject", "Dec 17, 2014 5:56 PM"], ["news_letters", "Feb 18, 2015 1:41 PM"],
  ["notices", "Dec 17, 2014 5:52 PM"], ["PHPMailer", "Dec 22, 2014 11:43 AM"],
  ["pm", "Dec 24, 2014 5:32 PM"], ["popup", "Dec 17, 2014 5:52 PM"],
  ["portals", "Dec 28, 2014 3:31 PM"], ["reports", "Dec 17, 2014 5:53 PM"],
  ["share_files", "Dec 17, 2014 5:59 PM"], ["smartphpcalendar", "Jan 23, 2015 3:23 PM"]
];
document.getElementById("rows").innerHTML = files.map(([name, when]) => {
  const cls = when.length > 20 ? ' class="tall"' : "";
  return `<tr><td>${icon("", "dir")}</td><td>${name}</td><td>4 KB</td><td${cls}>${when}</td><td>httpd/unix-directory</td><td>0755</td></tr>`;
}).join("");
```
